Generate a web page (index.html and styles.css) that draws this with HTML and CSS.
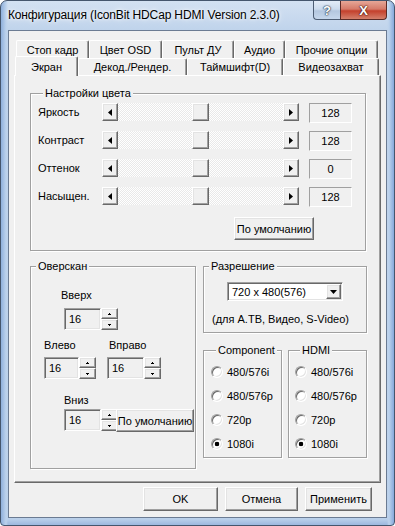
FILE: index.html
```html
<!DOCTYPE html>
<html>
<head>
  <title>Конфигурация</title>
  <meta charset="UTF-8">
  <link rel="stylesheet" href="styles.css">
</head>
<body>
  <div class="window">
    <div class="titlebar">
      <div class="caption">Конфигурация (IconBit HDCap HDMI Version 2.3.0)</div>
      <div class="caption-buttons">
        <div class="cap-btn help">?</div>
        <div class="cap-btn close">X</div>
      </div>
    </div>

    <div class="client">
      <div class="tabs">
        <div class="tab-row back">
          <div class="tab" style="width:73px">Стоп кадр</div>
          <div class="tab" style="width:73px">Цвет OSD</div>
          <div class="tab" style="width:72px">Пульт ДУ</div>
          <div class="tab" style="width:51px">Аудио</div>
          <div class="tab" style="width:93px">Прочие опции</div>
        </div>
        <div class="tab-row front">
          <div class="tab selected" style="width:63px">Экран</div>
          <div class="tab" style="width:109px">Декод./Рендер.</div>
          <div class="tab" style="width:96px">Таймшифт(D)</div>
          <div class="tab" style="width:96px">Видеозахват</div>
        </div>
      </div>

      <div class="page">
        <fieldset class="group color-group">
          <legend>Настройки цвета</legend>
          <div class="slider-rows">
            <div class="slider-row">
              <span class="slider-label">Яркость</span>
              <div class="scrollbar">
                <div class="sb-btn raised"><svg width="4" height="7" viewBox="0 0 4 7"><path d="M4 0V7L0 3.5Z"/></svg></div>
                <div class="sb-track"><div class="sb-thumb raised"></div></div>
                <div class="sb-btn raised"><svg width="4" height="7" viewBox="0 0 4 7"><path d="M0 0V7L4 3.5Z"/></svg></div>
              </div>
              <div class="value-box">128</div>
            </div>
            <div class="slider-row">
              <span class="slider-label">Контраст</span>
              <div class="scrollbar">
                <div class="sb-btn raised"><svg width="4" height="7" viewBox="0 0 4 7"><path d="M4 0V7L0 3.5Z"/></svg></div>
                <div class="sb-track"><div class="sb-thumb raised"></div></div>
                <div class="sb-btn raised"><svg width="4" height="7" viewBox="0 0 4 7"><path d="M0 0V7L4 3.5Z"/></svg></div>
              </div>
              <div class="value-box">128</div>
            </div>
            <div class="slider-row">
              <span class="slider-label">Оттенок</span>
              <div class="scrollbar">
                <div class="sb-btn raised"><svg width="4" height="7" viewBox="0 0 4 7"><path d="M4 0V7L0 3.5Z"/></svg></div>
                <div class="sb-track"><div class="sb-thumb raised"></div></div>
                <div class="sb-btn raised"><svg width="4" height="7" viewBox="0 0 4 7"><path d="M0 0V7L4 3.5Z"/></svg></div>
              </div>
              <div class="value-box">0</div>
            </div>
            <div class="slider-row">
              <span class="slider-label">Насыщен.</span>
              <div class="scrollbar">
                <div class="sb-btn raised"><svg width="4" height="7" viewBox="0 0 4 7"><path d="M4 0V7L0 3.5Z"/></svg></div>
                <div class="sb-track"><div class="sb-thumb raised"></div></div>
                <div class="sb-btn raised"><svg width="4" height="7" viewBox="0 0 4 7"><path d="M0 0V7L4 3.5Z"/></svg></div>
              </div>
              <div class="value-box">128</div>
            </div>
          </div>
          <div class="btn raised default-color">По умолчанию</div>
        </fieldset>

        <div class="lower">
          <fieldset class="group overscan">
            <legend>Оверскан</legend>
            <div class="os-label top-label">Вверх</div>
            <div class="spin top-spin">
              <div class="spin-edit sunken">16</div>
              <div class="spin-btns">
                <div class="spin-btn raised"><svg width="3" height="2" viewBox="0 0 3 2"><path d="M1 0h1v1h1v1H0V1h1z"/></svg></div>
                <div class="spin-btn raised"><svg width="3" height="2" viewBox="0 0 3 2"><path d="M0 0h3v1H2v1H1V1H0z"/></svg></div>
              </div>
            </div>
            <div class="lr-labels">
              <span class="os-label left-label">Влево</span>
              <span class="os-label right-label">Вправо</span>
            </div>
            <div class="lr-spins">
              <div class="spin">
                <div class="spin-edit sunken narrow">16</div>
                <div class="spin-btns">
                  <div class="spin-btn raised"><svg width="3" height="2" viewBox="0 0 3 2"><path d="M1 0h1v1h1v1H0V1h1z"/></svg></div>
                  <div class="spin-btn raised"><svg width="3" height="2" viewBox="0 0 3 2"><path d="M0 0h3v1H2v1H1V1H0z"/></svg></div>
                </div>
              </div>
              <div class="spin">
                <div class="spin-edit sunken">16</div>
                <div class="spin-btns">
                  <div class="spin-btn raised"><svg width="3" height="2" viewBox="0 0 3 2"><path d="M1 0h1v1h1v1H0V1h1z"/></svg></div>
                  <div class="spin-btn raised"><svg width="3" height="2" viewBox="0 0 3 2"><path d="M0 0h3v1H2v1H1V1H0z"/></svg></div>
                </div>
              </div>
            </div>
            <div class="os-label bottom-label">Вниз</div>
            <div class="bottom-line">
              <div class="spin">
                <div class="spin-edit sunken">16</div>
                <div class="spin-btns">
                  <div class="spin-btn raised"><svg width="3" height="2" viewBox="0 0 3 2"><path d="M1 0h1v1h1v1H0V1h1z"/></svg></div>
                  <div class="spin-btn raised"><svg width="3" height="2" viewBox="0 0 3 2"><path d="M0 0h3v1H2v1H1V1H0z"/></svg></div>
                </div>
              </div>
              <div class="btn raised default-overscan">По умолчанию</div>
            </div>
          </fieldset>

          <div class="right-col">
            <fieldset class="group resolution">
              <legend>Разрешение</legend>
              <div class="combo sunken">
                <span class="combo-text">720 x 480(576)</span>
                <div class="combo-btn raised"><svg width="7" height="4" viewBox="0 0 7 4"><path d="M0 0h7L3.5 4z"/></svg></div>
              </div>
              <div class="res-note">(для А.ТВ, Видео, S-Video)</div>
            </fieldset>

            <div class="outputs">
              <fieldset class="group output">
                <legend>Component</legend>
                <div class="radio"><span class="radio-dot"></span>480/576i</div>
                <div class="radio"><span class="radio-dot"></span>480/576p</div>
                <div class="radio"><span class="radio-dot"></span>720p</div>
                <div class="radio"><span class="radio-dot checked"></span>1080i</div>
              </fieldset>
              <fieldset class="group output hdmi">
                <legend>HDMI</legend>
                <div class="radio"><span class="radio-dot"></span>480/576i</div>
                <div class="radio"><span class="radio-dot"></span>480/576p</div>
                <div class="radio"><span class="radio-dot"></span>720p</div>
                <div class="radio"><span class="radio-dot checked"></span>1080i</div>
              </fieldset>
            </div>
          </div>
        </div>
      </div>

      <div class="dialog-buttons">
        <div class="btn raised" style="width:75px">OK</div>
        <div class="btn raised" style="width:73px">Отмена</div>
        <div class="btn raised" style="width:67px">Применить</div>
      </div>
    </div>
  </div>
</body>
</html>
```

FILE: styles.css
```css
* {
  box-sizing: border-box;
}

body {
  margin: 0;
  background: #fff;
  font-family: "Liberation Sans", Arial, sans-serif;
  font-size: 11px;
  color: #000;
}

/* window frame */

.window {
  width: 395px;
  height: 526px;
  display: flex;
  flex-direction: column;
  border: 1px solid #45566d;
  border-radius: 7px 7px 4px 4px;
  background:
    linear-gradient(to right, #8fb0dc 0, #bcd2ec 5px, rgba(188, 210, 236, 0) 7px, rgba(188, 210, 236, 0) calc(100% - 7px), #bcd2ec calc(100% - 5px), #86a9db 100%),
    linear-gradient(to bottom, #d3e1f2 0, #bfd3eb 30px, #bad0ea calc(100% - 6px), #9db8df 100%);
}

.titlebar {
  height: 29px;
  display: flex;
  align-items: flex-start;
}

.caption {
  padding: 6px 0 0 7px;
  font-size: 12px;
  line-height: 16px;
  letter-spacing: -0.15px;
  text-shadow: 0 0 6px #fff, 0 0 3px #fff;
}

.caption-buttons {
  display: flex;
  margin-left: auto;
  margin-right: 7px;
}

.cap-btn {
  height: 19px;
  display: flex;
  align-items: center;
  justify-content: center;
  font-weight: bold;
  font-size: 13px;
  color: #fff;
  border: 1px solid #4d5d73;
  border-top: none;
}

.cap-btn.help {
  width: 27px;
  border-radius: 0 0 0 4px;
  border-right: none;
  background: linear-gradient(to bottom, #e3ecf7 0, #ccdbed 45%, #b4c7df 55%, #c6d7ec 100%);
  text-shadow: 0 0 1px #2c3e55, 0 0 1px #2c3e55, 0 0 2px #2c3e55;
}

.cap-btn.close {
  width: 47px;
  border-radius: 0 0 4px 0;
  border-color: #5a2a26;
  background: linear-gradient(to bottom, #e6a797 0, #d57a69 45%, #c4402c 55%, #d4806c 100%);
  text-shadow: 0 0 1px #4a1a14, 0 0 1px #4a1a14, 0 0 2px #4a1a14;
}

.client {
  flex: 1;
  margin: 0 7px 7px;
  border: 1px solid #6b7b92;
  background: #f0f0f0;
  padding: 9px 5px 0;
}

/* classic 3d */

.raised {
  background: #f0f0f0;
  border: 1px solid;
  border-color: #fff #696969 #696969 #fff;
  box-shadow: inset -1px -1px #a0a0a0, inset 1px 1px #e3e3e3;
}

.sunken {
  border: 1px solid;
  border-color: #a0a0a0 #fff #fff #a0a0a0;
  box-shadow: inset 1px 1px #696969, inset -1px -1px #e3e3e3;
}

.btn {
  display: flex;
  align-items: center;
  justify-content: center;
  height: 23px;
}

/* tabs */

.tab-row {
  display: flex;
}

.tab-row.back {
  height: 18px;
  margin-left: 2px;
}

.tab-row.front {
  height: 17px;
  margin-left: 1px;
  align-items: flex-start;
}

.tab {
  height: 100%;
  display: flex;
  align-items: center;
  justify-content: center;
  background: #f0f0f0;
  border-top: 1px solid #fff;
  border-left: 1px solid #fff;
  border-right: 1px solid #696969;
  border-radius: 2px 2px 0 0;
  box-shadow: inset -1px 0 #a0a0a0;
}

.tab.selected {
  position: relative;
  z-index: 1;
  height: 20px;
  margin-top: -2px;
}

.page {
  width: 367px;
  height: 408px;
  border: 1px solid;
  border-color: #fff #696969 #696969 #fff;
  box-shadow: inset -1px -1px #a0a0a0;
  padding: 11px 0 0 15px;
}

/* group boxes */

.group {
  margin: 0;
  padding: 0;
  border: 1px solid #a0a0a0;
  box-shadow: inset 1px 1px #fff, 1px 1px #fff;
}

.group legend {
  margin-left: 5px;
  padding: 0 2px;
  line-height: 13px;
  background: #f0f0f0;
}

.color-group {
  width: 336px;
  padding: 3px 0 10px 7px;
}

.slider-rows {
  display: flex;
  flex-direction: column;
  gap: 8px;
}

.slider-row {
  display: flex;
  align-items: flex-start;
  height: 20px;
}

.slider-label {
  width: 64px;
  line-height: 18px;
}

.scrollbar {
  display: flex;
  width: 197px;
  height: 18px;
}

.sb-btn {
  width: 16px;
  height: 18px;
  display: flex;
  align-items: center;
  justify-content: center;
}

.sb-track {
  flex: 1;
  display: flex;
  justify-content: center;
  background-image: repeating-conic-gradient(#fff 0 25%, #e9e9e9 0 50%);
  background-size: 2px 2px;
}

.sb-thumb {
  width: 17px;
  height: 18px;
}

.value-box {
  width: 43px;
  height: 20px;
  margin-left: 10px;
  display: flex;
  align-items: center;
  justify-content: center;
  border: 1px solid;
  border-color: #a0a0a0 #fff #fff #a0a0a0;
}

.default-color {
  width: 80px;
  margin: 10px 0 0 196px;
}

/* lower part */

.lower {
  display: flex;
  gap: 7px;
  margin-top: 9px;
}

.overscan {
  width: 166px;
  height: 209px;
  padding: 16px 0 0;
}

.os-label {
  line-height: 13px;
}

.top-label {
  margin-left: 30px;
}

.spin {
  display: flex;
}

.top-spin {
  margin: 6px 0 0 33px;
}

.spin-edit {
  width: 37px;
  height: 22px;
  padding: 3px 0 0 4px;
  line-height: 14px;
  background: #f0f0f0;
}

.spin-edit.narrow {
  width: 35px;
}

.spin-btns {
  display: flex;
  flex-direction: column;
}

.spin-btn {
  width: 17px;
  height: 11px;
  display: flex;
  align-items: center;
  justify-content: center;
}

.lr-labels {
  display: flex;
  margin: 9px 0 0 13px;
}

.left-label {
  width: 65px;
}

.lr-spins {
  display: flex;
  gap: 11px;
  margin: 5px 0 0 13px;
}

.bottom-label {
  margin: 15px 0 0 33px;
}

.bottom-line {
  display: flex;
  align-items: flex-start;
  margin: 2px 0 0 33px;
}

.bottom-line .spin-btns {
  margin-right: -2px;
}

.default-overscan {
  width: 78px;
  position: relative;
}

.right-col {
  width: 164px;
}

.resolution {
  width: 164px;
  padding: 9px 0 6px 0;
}

.combo {
  width: 116px;
  height: 19px;
  margin-left: 23px;
  display: flex;
  align-items: center;
  padding: 1px;
  background: #fff;
}

.combo-text {
  flex: 1;
  padding-left: 3px;
}

.combo-btn {
  width: 15px;
  height: 15px;
  display: flex;
  align-items: center;
  justify-content: center;
}

.res-note {
  margin: 12px 0 0 8px;
  line-height: 13px;
}

.outputs {
  display: flex;
  gap: 6px;
  margin-top: 11px;
}

.output {
  width: 79px;
  padding: 8px 0 7px 7px;
  display: flex;
  flex-direction: column;
  gap: 11px;
}

.output.hdmi {
  padding-left: 6px;
}

.radio {
  display: flex;
  align-items: center;
  gap: 4px;
  height: 13px;
}

.radio-dot {
  width: 12px;
  height: 12px;
  border-radius: 50%;
  border: 1px solid;
  border-color: #a0a0a0 #fff #fff #a0a0a0;
  box-shadow: inset 1px 1px #696969, inset -1px -1px #e3e3e3;
  background: #fff;
}

.radio-dot.checked {
  background: radial-gradient(circle, #000 0 2px, #fff 2.6px);
}

/* bottom buttons */

.dialog-buttons {
  display: flex;
  justify-content: flex-end;
  gap: 7px;
  margin-top: 4px;
  padding-right: 9px;
}

.dialog-buttons .btn {
  height: 24px;
}
```
